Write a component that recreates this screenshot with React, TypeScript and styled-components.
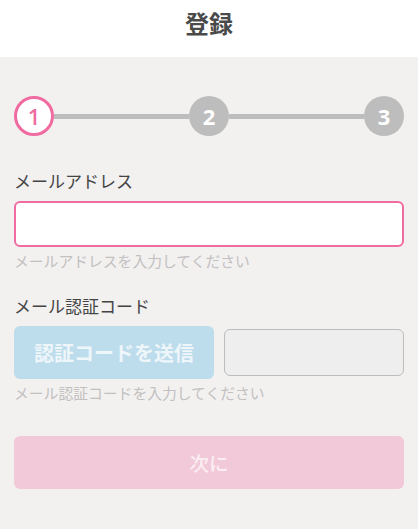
import styled, { createGlobalStyle } from 'styled-components';

const GlobalStyle = createGlobalStyle`
  html, body {
    margin: 0;
    padding: 0;
    background: #f2f1f0;
    font-family: 'Noto Sans CJK JP', 'Noto Sans', sans-serif;
  }
  * { box-sizing: border-box; }
`;

const steps = [1, 2, 3];

export default function App() {
  return (
    <Page>
      <GlobalStyle />
      <Header>
        <Title>登録</Title>
      </Header>
      <Body>
        <Stepper>
          {steps.map((n, i) => (
            <StepGroup key={n} $last={i === steps.length - 1}>
              <Circle $active={n === 1}>{n}</Circle>
              {i < steps.length - 1 && <Line />}
            </StepGroup>
          ))}
        </Stepper>

        <Field>
          <Label>メールアドレス</Label>
          <EmailInput type='email' />
          <Help>メールアドレスを入力してください</Help>
        </Field>

        <Field>
          <Label>メール認証コード</Label>
          <CodeRow>
            <SendButton disabled>認証コードを送信</SendButton>
            <CodeInput disabled />
          </CodeRow>
          <Help>メール認証コードを入力してください</Help>
        </Field>

        <NextButton disabled>次に</NextButton>
      </Body>
    </Page>
  );
}

const Page = styled.div`
  width: 418px;
  min-height: 529px;
  background: #f2f1f0;
`;

const Header = styled.header`
  height: 57px;
  background: #ffffff;
  display: flex;
  align-items: center;
  justify-content: center;
`;

const Title = styled.h1`
  margin: 0 0 12px;
  font-size: 24px;
  font-weight: bold;
  color: #4a4a4a;
`;

const Body = styled.main`
  padding: 39px 14px 0;
`;

const Stepper = styled.div`
  display: flex;
  align-items: center;
`;

const StepGroup = styled.div<{ $last: boolean }>`
  display: flex;
  align-items: center;
  flex: ${(p) => (p.$last ? '0 0 auto' : '1 1 0')};
`;

const Circle = styled.div<{ $active: boolean }>`
  width: 40px;
  height: 40px;
  border-radius: 50%;
  flex: 0 0 auto;
  display: flex;
  align-items: center;
  justify-content: center;
  font-family: 'Open Sans', sans-serif;
  font-size: 22px;
  font-weight: ${(p) => (p.$active ? 600 : 700)};
  background: ${(p) => (p.$active ? '#ffffff' : '#bdbdbd')};
  border: ${(p) => (p.$active ? '3px solid #ef6ba0' : 'none')};
  color: ${(p) => (p.$active ? '#ef6ba0' : '#ffffff')};
`;

const Line = styled.div`
  flex: 1;
  height: 5px;
  background: #bdbdbd;
`;

const Field = styled.div`
  display: flex;
  flex-direction: column;
  margin-top: 33px;
  & + & {
    margin-top: 24px;
  }
`;

const Label = styled.label`
  font-size: 17px;
  line-height: 24px;
  color: #444444;
  margin-bottom: 8px;
`;

const EmailInput = styled.input`
  height: 46px;
  border: 2px solid #ef6ba0;
  border-radius: 6px;
  background: #ffffff;
  outline: none;
  padding: 0 12px;
  font-size: 16px;
`;

const Help = styled.div`
  font-size: 14.8px;
  line-height: 18px;
  color: #c2c0c0;
  margin-top: 5px;
`;

const CodeRow = styled.div`
  display: flex;
  align-items: center;
  gap: 10px;
  height: 53px;
`;

const SendButton = styled.button`
  width: 200px;
  height: 53px;
  border: none;
  border-radius: 6px;
  background: #bddcec;
  color: #eef6fa;
  font-family: inherit;
  font-size: 20px;
  font-weight: bold;
  padding: 0;
`;

const CodeInput = styled.input`
  flex: 1;
  min-width: 0;
  height: 47px;
  border: 1px solid #bdbdbd;
  border-radius: 6px;
  background: #eeeeee;
  outline: none;
`;

const NextButton = styled.button`
  display: block;
  width: 100%;
  height: 53px;
  margin-top: 34px;
  border: none;
  border-radius: 6px;
  background: #f2c9d8;
  color: #fbeef3;
  font-family: inherit;
  font-size: 19.5px;
  font-weight: 500;
`;
